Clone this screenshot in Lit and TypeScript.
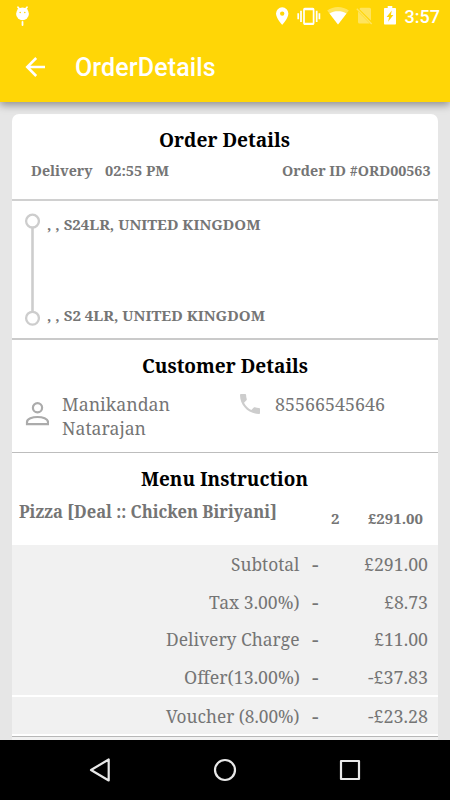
import { LitElement, html, css } from "lit";
import { customElement } from "lit/decorators.js";

const label = (text: string, width: number, kind: string) => html`
  <svg class="label ${kind}" width=${width} height="24">
    <text x="0" y="18" textLength=${width} lengthAdjust="spacingAndGlyphs">${text}</text>
  </svg>`;

const charges = [
  { name: "Subtotal", nw: 68.5, amount: "£291.00", aw: 64 },
  { name: "Tax 3.00%)", nw: 90.5, amount: "£8.73", aw: 44 },
  { name: "Delivery Charge", nw: 133.5, amount: "£11.00", aw: 54 },
  { name: "Offer(13.00%)", nw: 116, amount: "-£37.83", aw: 60 },
  { name: "Voucher (8.00%)", nw: 133.5, amount: "-£23.28", aw: 60 },
];

@customElement("app-root")
export class AppRoot extends LitElement {
  static styles = css`
    :host {
      display: flex;
      flex-direction: column;
      width: 450px;
      height: 800px;
      overflow: hidden;
      background: #e6e6e6;
    }
    * { box-sizing: border-box; }
    svg { display: block; flex: none; }
    .label { overflow: visible; margin: 0 0.5px 0 -0.5px; font-family: "Noto Serif", "DejaVu Serif Condensed", "DejaVu Serif", serif; fill: #757575; }
    .label.title { font-size: 19px; font-weight: 700; fill: #000; }
    .label.small { font-size: 15px; font-weight: 700; }
    .label.item { font-size: 17.5px; font-weight: 700; }
    .label.body { font-size: 17.8px; }
    .label.mark { font-size: 16px; font-weight: 700; }
    .top {
      flex: none;
      height: 102px;
      background: #ffd606;
      color: #fff;
      fill: #fff;
      font-family: Roboto, sans-serif;
      font-weight: 500;
      box-shadow: 0 3px 8px rgba(0, 0, 0, 0.38);
      z-index: 1;
    }
    .status { display: flex; height: 32px; padding-left: 15px; justify-content: space-between; }
    .bug { margin-top: 5px; }
    .system { display: flex; width: 180px; }
    .clock { margin-left: 4.5px; font-size: 18px; line-height: 33px; white-space: nowrap; }
    .bar { display: flex; align-items: center; height: 70px; padding-left: 24px; }
    .heading { margin-left: 28px; font-size: 25px; line-height: 30px; padding-top: 1px; letter-spacing: 0.12px; }
    .content { flex: none; height: 638px; padding: 12px 12px 0; }
    .card { height: 626px; overflow: hidden; border-radius: 7px 7px 0 0; background: #fff; }
    .section { display: flex; flex-direction: column; align-items: center; }
    .overview { height: 87px; padding-top: 15px; border-bottom: 2px solid #d0d0d0; }
    .meta { display: flex; width: 100%; margin-top: 5px; padding: 0 7px 0 19.5px; justify-content: space-between; }
    .pair { display: flex; gap: 12.5px; }
    .route { display: flex; height: 139px; padding: 11px 0 0 12px; gap: 7px; border-bottom: 2px solid #cacaca; }
    .track { margin-top: 1px; }
    .stops { display: flex; flex-direction: column; justify-content: space-between; height: 115px; }
    .customer { height: 113px; padding-top: 15px; border-bottom: 1px solid #bdbdbd; }
    .people { display: grid; grid-template-columns: 215px 1fr; width: 100%; margin-top: 14px; padding-left: 13px; }
    .person, .phone { display: flex; }
    .person { gap: 13.5px; }
    .phone { gap: 15px; }
    .person-icon { margin-top: 9px; }
    .phone-icon { margin-top: 1px; }
    .names { display: flex; flex-direction: column; }
    .names svg + svg { margin-top: -0.5px; }
    .menu { height: 92px; padding-top: 15px; }
    .dish { display: flex; width: 100%; margin-top: 7.5px; padding: 0 15px 0 7px; }
    .count { display: flex; gap: 28px; margin: 6.5px 0 0 auto; }
    .charge { display: flex; height: 37.5px; padding: 8px 9.5px 0 0; justify-content: flex-end; background: #f1f1f1; }
    .charge.last { height: 37px; margin-top: 2px; }
    .dash { display: flex; width: 18.5px; justify-content: flex-end; }
    .amount { display: flex; width: 110px; justify-content: flex-end; }
    .closing { height: 1px; margin-top: 2px; background: #b8b8b8; }
    .after { height: 3px; background: #f1f1f1; }
    .nav { display: flex; flex: none; height: 60px; align-items: center; justify-content: space-between; padding: 0 88px; background: #000; z-index: 2; }
    .nav svg { fill: none; stroke: #e8e8e8; stroke-width: 2.2; stroke-linejoin: round; }
  `;

  render() {
    return html`
      <header class="top">
        <div class="status">
          <svg class="bug" width="15" height="22" viewBox="0 0 15 22">
            <path d="M3 2.2 4.8 4.5M12 2.2 10.2 4.5M7.5 16.8V20" fill="none" stroke="#fff" stroke-width="1.8" stroke-linecap="round"/>
            <circle cx="7.5" cy="8.8" r="6.4"/>
            <circle cx="5.2" cy="7.5" r=".8" fill="#ffd606"/><circle cx="9.8" cy="7.5" r=".8" fill="#ffd606"/>
          </svg>
          <div class="system">
            <svg width="130" height="32" viewBox="0 0 130 32">
              <path fill-rule="evenodd" d="M12.2 7.3A6.2 6.2 0 0 0 6 13.6C6 18.3 12.2 25 12.2 25s6.2-6.7 6.2-11.4a6.2 6.2 0 0 0-6.2-6.3Zm0 4.1a2.2 2.2 0 1 1 0 4.4 2.2 2.2 0 0 1 0-4.4Z"/>
              <g fill="none" stroke="#fff" stroke-width="1.7">
                <rect x="34" y="8.7" width="9.6" height="15.4" rx=".8"/>
                <path d="M34 9.2h9.6M34 23.7h9.6" stroke-width="2"/>
                <path d="M31 10.8v11.2M46.7 10.8v11.2"/>
                <path d="M28.2 13.2v6M49.4 13.2v6"/>
              </g>
              <path opacity=".35" d="M68 24.4 57.2 10.6C60.2 8.3 64 7 68 7s7.8 1.3 10.8 3.6Z"/>
              <path d="M68 24.4 59.5 13.5C62 11.8 64.9 11.2 68 11.2s6 .6 8.5 2.3Z"/>
              <g opacity=".35">
                <path d="M90.5 7.8H99.5a1.5 1.5 0 0 1 1.5 1.5V20.4L89.3 8.9ZM88 11.6 99.8 23.4H89.5A1.5 1.5 0 0 1 88 21.9Z"/>
                <path d="M86.8 8.8 101.7 23.9" fill="none" stroke="#fff" stroke-width="1.4"/>
              </g>
              <path fill-rule="evenodd" d="M117.7 6h4.6v1.9h2.7c.6 0 1 .4 1 1v14.6c0 .6-.4 1-1 1h-10c-.6 0-1-.4-1-1V8.9c0-.6.4-1 1-1h2.7ZM121.8 10.6 116.6 17h2.5l-1 4.7 5.3-6.8h-2.5Z"/>
            </svg>
            <div class="clock">3:57</div>
          </div>
        </div>
        <div class="bar">
          <svg width="23" height="22" viewBox="0 0 23 22"><path d="M21 11H3.5M12.2 2 3.2 11l9 9" fill="none" stroke="#fff" stroke-width="2.5"/></svg>
          <div class="heading">OrderDetails</div>
        </div>
      </header>
      <main class="content">
        <div class="card">
          <section class="section overview">
            ${label("Order Details", 131, "title")}
            <div class="meta">
              <div class="pair">${label("Delivery", 61.5, "small")}${label("02:55 PM", 64, "small")}</div>
              ${label("Order ID #ORD00563", 148.5, "small")}
            </div>
          </section>
          <section class="route">
            <svg class="track" width="16" height="115" viewBox="0 0 16 115" fill="none" stroke="#cdcdcd">
              <path d="M8.5 15V98" stroke-width="2.6"/>
              <circle cx="8.5" cy="8.1" r="6.4" stroke-width="2.3"/>
              <circle cx="8.5" cy="105.2" r="6.4" stroke-width="2.3"/>
            </svg>
            <div class="stops">
              ${label(", , S24LR, UNITED KINGDOM", 213.5, "small")}
              ${label(", , S2 4LR, UNITED KINGDOM", 218, "small")}
            </div>
          </section>
          <section class="section customer">
            ${label("Customer Details", 166, "title")}
            <div class="people">
              <div class="person">
                <svg class="person-icon" width="24" height="24" viewBox="0 0 24 24" fill="none" stroke="#ababab" stroke-width="2.2">
                  <circle cx="12.5" cy="5.8" r="4.6"/>
                  <path d="M2 22.2V20C2 16.8 7.5 15 12.5 15S23 16.8 23 20V22.2Z"/>
                </svg>
                <div class="names">
                  ${label("Manikandan", 108, "body")}
                  ${label("Natarajan", 84, "body")}
                </div>
              </div>
              <div class="phone">
                <svg class="phone-icon" width="20" height="20" viewBox="3 3 18 18" fill="#cdcdcd"><path d="M6.62 10.79c1.44 2.83 3.76 5.14 6.59 6.59l2.2-2.2c.27-.27.67-.36 1.02-.24 1.12.37 2.33.57 3.57.57.55 0 1 .45 1 1V20c0 .55-.45 1-1 1-9.39 0-17-7.61-17-17 0-.55.45-1 1-1h3.5c.55 0 1 .45 1 1 0 1.25.2 2.45.57 3.57.11.35.03.74-.25 1.02l-2.2 2.2z"/></svg>
                ${label("85566545646", 110, "body")}
              </div>
            </div>
          </section>
          <section class="section menu">
            ${label("Menu Instruction", 167, "title")}
            <div class="dish">
              ${label("Pizza [Deal :: Chicken Biriyani]", 258, "item")}
              <div class="count">${label("2", 8.5, "small")}${label("£291.00", 55, "small")}</div>
            </div>
          </section>
          ${charges.map((c, i) => html`
            <div class="charge ${i === charges.length - 1 ? "last" : ""}">
              ${label(c.name, c.nw, "body")}
              <div class="dash">${label("-", 6.5, "mark")}</div>
              <div class="amount">${label(c.amount, c.aw, "body")}</div>
            </div>`)}
          <div class="closing"></div>
          <div class="after"></div>
        </div>
      </main>
      <nav class="nav">
        <svg width="24" height="26" viewBox="0 0 24 26"><path d="M3 13 20.7 2.5v21Z"/></svg>
        <svg width="24" height="24" viewBox="0 0 24 24"><circle cx="12" cy="12" r="10"/></svg>
        <svg width="24" height="24" viewBox="0 0 24 24"><rect x="3" y="3" width="18" height="18"/></svg>
      </nav>`;
  }
}
